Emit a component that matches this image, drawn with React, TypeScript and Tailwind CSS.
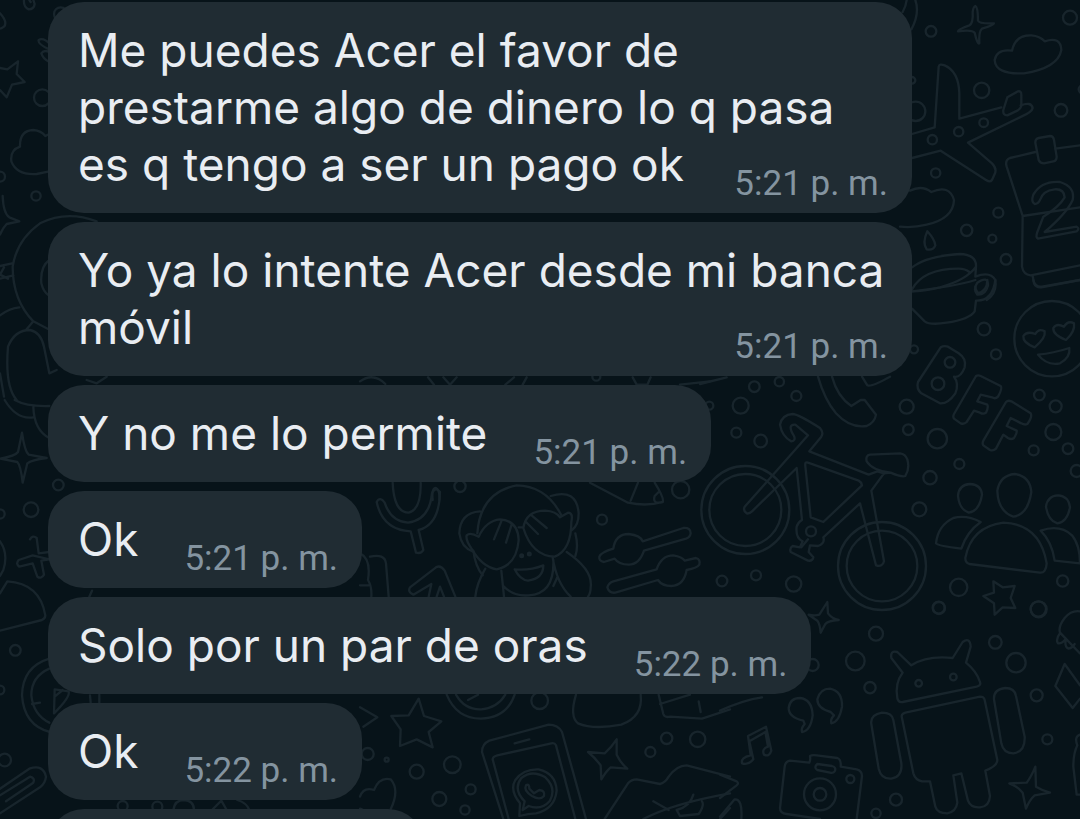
type Message = { id: number; text: string; time: string };

const messages: Message[] = [
  { id: 1, text: "Me puedes Acer el favor de prestarme algo de dinero lo q pasa es q tengo a ser un pago ok", time: "5:21 p. m." },
  { id: 2, text: "Yo ya lo intente Acer desde mi banca móvil", time: "5:21 p. m." },
  { id: 3, text: "Y no me lo permite", time: "5:21 p. m." },
  { id: 4, text: "Ok", time: "5:21 p. m." },
  { id: 5, text: "Solo por un par de oras", time: "5:22 p. m." },
  { id: 6, text: "Ok", time: "5:22 p. m." },
];

type Tile = { x: number; y: number; paths: string[]; dots: [number, number, number][] };

// Each tile is drawn at three units to the pixel, from its own origin.
const tiles: Tile[] = [
  {
    // plane, clouds, calendar, cup
    x: 900,
    y: 0,
    dots: [
      [93, 94, 16], [510, 53, 21], [245, 271, 23], [483, 331, 19], [251, 368, 13], [176, 395, 14],
      [97, 419, 14], [107, 519, 14], [295, 638, 15], [200, 691, 17], [277, 716, 12], [318, 778, 16],
      [47, 334, 29], [36, 241, 10], [548, 268, 12],
    ],
    paths: [
      "M8 36Q18 18 20 0M34 88Q60 40 46 0",
      "M226 18Q234 22 234 62Q238 72 282 70Q282 76 246 86Q236 94 238 130Q232 134 224 98Q216 88 174 94Q174 88 208 76Q220 70 218 36Q220 20 226 18Z",
      "M336 152Q346 104 394 106Q420 108 434 124Q482 108 484 150Q474 204 372 220Q286 224 284 180Q290 146 336 152Z",
      "M36 402L104 382L116 200Q118 190 134 196Q176 214 178 280V356L304 322M362 316Q394 304 398 324Q396 336 364 350L204 428L276 490Q292 506 284 522L276 540Q270 548 258 540L122 452L36 474",
      "M322 292L354 274Q364 272 364 284V318Q362 326 352 332L322 346Q308 346 310 330Z",
      "M30 572Q66 554 94 576Q148 552 162 600Q160 656 80 674Q40 684 0 680",
      "M82 694Q104 718 106 736Q100 752 80 748Q66 728 82 694Z",
      "M36 802Q80 768 180 762Q230 764 228 800Q200 840 120 862Q70 874 36 874M36 868Q70 806 176 806Q196 806 208 816M228 800L226 830Q270 812 286 840Q292 880 260 900M232 848Q264 826 264 856Q256 886 232 884Q218 870 232 848Z",
      "M406 456L330 474Q314 480 320 500L368 648L366 800Q370 824 392 826L540 796M466 446L540 436M368 648L540 622M398 828L402 850Q408 864 424 862L540 840",
      "M416 414L450 408Q460 408 462 420L470 470Q470 482 460 484L432 490Q420 490 416 480L406 428Q406 416 416 414Z",
      "M404 612Q392 606 400 584Q424 542 480 546Q526 560 518 600Q500 640 434 696L530 680Q540 686 530 694L414 716Q406 712 412 696L430 650Q478 620 494 592Q492 566 464 568Q428 572 420 600Q414 612 404 612Z",
    ],
  },
  {
    // bicycle, phone, letters, faces, group
    x: 700,
    y: 280,
    dots: [
      [852, 147, 19], [888, 223, 15], [642, 208, 12], [163, 320, 16], [238, 305, 14], [289, 348, 15],
      [122, 377, 24], [28, 377, 12], [109, 458, 15], [182, 483, 19], [620, 380, 21], [625, 449, 16],
      [712, 476, 29], [778, 552, 15], [690, 593, 20], [658, 688, 21], [1018, 345, 16], [1067, 379, 18],
      [1060, 456, 24], [1104, 506, 16], [1001, 511, 15], [1130, 573, 18], [750, 247, 16], [714, 311, 19],
      [66, 903, 16], [168, 886, 15], [281, 912, 23], [776, 922, 26], [1088, 903, 17], [717, 984, 18],
      [1016, 988, 24], [333, 754, 15], [1056, 176, 113],
      [136, 690, 132], [136, 690, 108], [546, 858, 132], [546, 858, 106],
    ],
    paths: [
      "M0 312L80 292M354 290Q374 360 408 400Q450 446 500 438Q524 428 528 404L494 360L482 360L454 378Q412 350 396 290M486 290L502 316Q512 322 570 290",
      "M636 34Q760 20 826 0M636 86L674 124Q690 136 740 128Q808 118 824 94L828 62Q878 64 886 0M832 40Q862 34 862 0M826 20Q828 44 846 38M1000 0Q1004 22 1026 20L1140 0",
      "M1004 202Q968 188 970 168Q980 152 1006 162Q1016 144 1034 154Q1038 174 1004 202ZM1098 180Q1058 164 1060 144Q1070 128 1092 140Q1104 120 1122 130Q1126 154 1098 180ZM1014 224Q1060 220 1108 204Q1112 232 1080 250Q1040 258 1014 224Z",
      "M722 202Q732 196 744 200L776 220Q800 236 794 262Q782 294 762 290Q778 310 766 340Q744 372 720 370L664 340Q648 326 654 306Z",
      "M828 288Q834 284 842 288L902 318Q908 324 894 350Q886 358 876 352L842 344L832 364L862 374Q866 382 858 398Q850 404 840 398L822 392L800 426Q792 434 782 430L762 416Q758 410 762 402ZM918 366Q924 360 934 364L992 400Q998 410 982 432Q974 436 964 430L932 414L920 438L950 452Q952 458 942 474Q934 480 924 474L910 464L888 506Q880 514 870 510L850 496Q846 490 850 482Z",
      "M140 700Q128 692 134 680L324 466L286 434Q260 432 282 468Q288 482 274 484Q246 470 240 434Q246 404 278 402Q294 402 360 444Q372 458 364 470L328 514L506 584L532 574L552 580L514 632L552 844Q548 862 528 856L480 670L370 772Q376 790 354 798L330 796L326 816L340 832Q338 844 324 842L272 816Q268 804 278 798L300 802L308 784Q286 774 290 740Q294 726 306 720L290 564L156 694Q148 702 140 700Z",
      "M324 548Q314 544 316 558L332 712L370 726L486 616Q484 606 476 602ZM304 802L324 778M552 580L572 578Q604 592 616 588Q630 566 622 538Q616 522 600 520L510 524Q496 526 500 544Q518 572 572 578",
      "M810 612Q844 614 846 644Q838 694 806 698Q778 688 774 648Q776 614 810 612ZM944 582Q990 588 994 636Q984 704 940 710Q894 694 892 632Q900 586 944 582ZM1074 646Q1106 648 1110 682Q1102 726 1072 730Q1044 722 1038 680Q1042 648 1074 646Z",
      "M842 726Q800 704 760 714Q714 736 708 790Q712 798 784 806Q800 756 842 726ZM796 834Q814 740 910 728Q1020 732 1040 850Q1038 880 1020 878L808 852Q796 848 796 834ZM1022 752Q1080 732 1116 766Q1140 796 1140 850L1064 842Q1056 786 1022 752Z",
      "M850 948L882 938L880 904L908 922L944 918L932 954L946 984L908 982L884 1004L882 970Z",
    ],
  },
  {
    // fork, hidden face, spanners
    x: 360,
    y: 480,
    dots: [[300, 19, 17], [726, 119, 15], [962, 29, 26], [485, 227, 4], [508, 222, 4]],
    paths: [
      "M98 8Q102 98 146 98Q184 88 182 8M50 66Q60 48 74 68Q92 124 144 128Q208 120 216 40Q226 18 240 36Q238 134 176 150L190 210Q184 222 168 218L152 154Q68 150 50 66Z",
      "M352 160Q360 38 470 16Q560 18 604 106M360 94Q300 98 298 160Q304 202 338 214M572 48Q650 24 656 100Q656 136 636 150M340 212Q346 260 368 286M646 160Q656 200 646 228",
      "M336 208Q316 180 320 166Q330 156 356 170Q378 122 420 118Q474 122 476 180Q470 256 410 268Q366 260 336 208ZM490 144Q498 92 556 92Q588 94 600 112L624 98Q640 98 634 126Q634 210 584 230Q516 228 490 144ZM476 142L490 142M402 178L424 124M438 188L456 130M512 104L560 144M498 126L534 162",
      "M464 268Q510 272 550 256Q550 296 504 302Q480 300 464 268ZM424 272L432 350M578 232Q590 310 632 350M376 266Q350 310 346 350M620 216Q700 270 692 322Q692 340 684 350M430 318Q460 350 506 346Q584 342 580 240M580 318L592 292",
      "M718 230Q724 216 760 206Q766 162 806 162Q842 166 848 184L970 144Q992 142 992 160Q990 172 978 176L852 212Q838 254 806 254Q776 254 764 236L732 246Q716 244 718 230ZM742 322Q746 308 760 304L890 268Q904 226 940 226Q966 230 974 242L1008 234Q1022 238 1018 254Q1012 264 980 270Q972 316 934 318Q906 318 894 300L766 338Q746 340 742 322Z",
      "M690 8L804 68Q860 80 908 66Q914 56 884 8M812 62L834 8M908 66Q876 74 884 48L896 36M0 220Q34 236 24 300Q36 320 34 350M30 230Q74 220 78 250L86 350M0 316L26 316M286 350L254 272Q242 254 228 262L150 322Q142 336 160 344L214 312L206 350M230 350L240 320L252 350",
    ],
  },
  {
    // stars, heart, handset, open book
    x: 360,
    y: 600,
    dots: [
      [539, 302, 25], [23, 462, 18], [80, 479, 6], [170, 515, 21], [277, 494, 25], [238, 597, 21],
      [332, 568, 15], [315, 630, 14], [920, 415, 17], [1013, 418, 23], [871, 456, 15],
    ],
    paths: [
      "M260 284Q290 356 362 356Q440 354 464 284M288 284Q314 330 364 328Q412 324 436 284M324 300L354 284",
      "M176 296L192 348L244 364L206 396L218 442L170 418L120 438L122 388L94 348L146 346ZM0 322L52 352L10 380",
      "M648 284Q628 350 654 370Q700 390 784 374Q850 350 842 284M896 284L910 342Q914 354 930 350L1026 356L1110 328M900 312L990 284M1016 304L1022 336",
      "M430 657L366 456Q366 432 388 422L566 374Q594 374 606 396L678 657M446 657L398 478Q398 470 412 466L574 430Q584 428 588 436L646 657M464 430L508 418",
      "M478 648L480 610Q448 570 466 540Q490 506 536 508Q588 520 590 572Q584 628 528 640Q506 640 478 648ZM488 630L494 604Q458 568 484 534Q516 508 556 532Q590 564 570 602Q544 632 506 618Z",
      "M498 556Q490 572 516 588Q540 602 552 588Q556 572 538 570L522 580L508 566Q508 550 498 556Z",
      "M770 418L770 464Q784 492 802 506L752 502Q738 514 724 538L722 496Q704 472 684 456L734 460Q754 442 770 418Z",
      "M0 590Q10 560 42 570Q58 530 92 538Q120 570 92 628M0 626Q8 628 20 640",
      "M734 657L804 550Q814 538 830 538L900 552Q916 548 926 530Q950 496 980 496L1110 530M850 657Q940 610 1110 580M880 604L926 630M1000 584Q990 620 950 630L960 648L1016 642Q1034 616 1026 604M1080 657L1110 624",
    ],
  },
  {
    // robot, camera, notes, quotes
    x: 720,
    y: 600,
    dots: [
      [656, 23, 18], [955, 27, 23], [468, 101, 21], [826, 127, 19], [406, 183, 28], [888, 188, 29],
      [278, 195, 18], [450, 263, 17], [950, 286, 18], [982, 418, 15], [528, 599, 18], [468, 640, 14],
      [596, 250, 10], [700, 231, 10], [391, 537, 12], [300, 583, 48], [300, 583, 19],
    ],
    paths: [
      "M322 6L324 40Q336 56 356 60Q324 62 316 72L302 98Q300 72 292 62L266 44Q286 48 298 44ZM0 332Q70 300 126 292",
      "M548 306Q534 308 532 294Q524 250 548 218L514 174Q510 150 532 156L574 196Q620 166 698 174L728 126Q750 110 752 140L738 188Q770 214 780 246Q784 256 770 260Z",
      "M546 354Q542 342 556 338L780 290Q792 290 794 300L832 480Q832 498 796 512L810 588Q808 620 780 622Q752 624 744 602L724 520L700 526L712 608Q708 636 682 640Q652 640 646 620L630 544L606 544Q586 540 580 520Z",
      "M454 372Q450 344 486 338Q516 338 520 360L544 490Q548 530 514 536Q484 538 476 506ZM822 298Q820 268 856 264Q884 264 888 288L914 410Q916 456 880 460Q850 460 844 430Z",
      "M250 362Q206 352 206 324Q210 294 240 294Q276 298 278 346Q272 392 246 396Q242 386 254 372ZM332 336Q292 326 292 298Q300 266 330 266Q368 274 366 320Q358 366 334 370Q330 358 342 346Z",
      "M84 408L138 380L154 452Q148 472 132 464Q124 446 144 440L136 396L88 424L100 478Q86 496 66 490Q62 472 92 466Z",
      "M210 482L268 488Q272 480 270 468Q276 464 290 466L352 474Q364 478 362 500L410 508Q426 512 426 528L410 657M210 482Q196 484 194 500L180 624Q180 640 200 642L300 657M292 492L336 498Q350 502 344 514Q340 520 330 518L292 510Q280 502 292 492Z",
      "M946 500L948 560Q968 572 990 578L944 586Q928 600 918 626L908 578Q894 560 868 550L920 548Q934 530 946 500Z",
      "M1080 34Q1054 30 1034 54Q1014 80 1020 98L1080 160M1020 100Q1006 118 1014 130Q1026 132 1038 116Q1032 140 1046 146Q1058 144 1064 132M1080 256L1034 192L1006 258L1058 324L1080 296M1080 404Q1062 410 1072 436Q1060 460 1060 500L1070 584H1080M0 524L50 544Q58 550 50 556L0 594M0 650L44 598Q68 596 64 657",
    ],
  },
  {
    // star, cloud and bear by the left edge
    x: 0,
    y: 0,
    dots: [[127, 293, 25], [108, 588, 14], [0, 530, 15], [182, 42, 20]],
    paths: [
      "M0 40Q24 66 12 80Q4 86 0 86M72 0Q70 20 86 28Q102 28 104 12L100 0M88 0L92 6",
      "M0 204L22 208L54 184L50 222L74 246L36 254L20 292L0 270M148 130Q130 112 116 120Q112 132 148 148M148 156Q132 148 124 160Q128 176 148 186",
      "M60 440Q58 392 100 390Q124 392 136 408L148 402M60 440Q30 450 34 484Q50 526 110 522L148 514M8 588Q10 640 28 652L58 664L20 672Q8 684 0 704",
      "M290 664Q200 630 120 670Q50 720 38 800Q38 900 100 964L150 990M148 780Q120 800 124 850Q130 876 146 886M0 798L36 790M0 836L40 826M12 802L0 824L24 836M0 946Q30 924 58 922M100 964L78 990M50 1200Q14 1160 24 1040Q44 990 90 990Q122 996 132 1040L148 1120L170 1110M0 1120L12 1190M260 1140L290 1150L320 1130",
    ],
  },
  {
    // sparkle, plus, compass, clip
    x: 0,
    y: 400,
    dots: [[175, 255, 16], [93, 329, 22], [0, 342, 14], [46, 751, 16], [0, 870, 13], [14, 1080, 19]],
    paths: [
      "M14 0Q50 60 100 52M44 0Q80 20 148 18M100 20Q102 90 148 114M66 98Q74 154 86 164L140 174Q94 180 82 190L68 248Q62 196 52 186L0 176Q46 168 54 156Z",
      "M90 418Q98 404 110 414L116 460L148 456M148 478L124 482L132 524Q124 538 112 530L98 490L58 500Q46 492 56 480L98 466ZM0 424Q26 460 10 510L0 528M0 580L22 544Q120 550 136 646Q136 656 126 660L0 692M268 590L276 572",
      "M148 776Q68 800 66 886Q72 976 150 996M148 806Q94 830 94 886Q100 944 148 968M96 912L120 908M162 940L164 868L206 874Q212 890 162 940ZM164 890L188 870M272 908L270 886M298 908V884",
      "M0 1166L88 1106Q130 1092 138 1130Q136 1150 120 1162L0 1240M0 1186L90 1130Q106 1134 100 1148L18 1204",
    ],
  },
  {
    // pieces seen between the bubbles
    x: 360,
    y: 370,
    dots: [[709, 20, 12]],
    paths: [
      "M0 34Q40 6 76 42M204 22L222 44M250 22L270 44L290 22M436 44L462 22M488 44L500 22M818 22L830 44L862 44L872 22M960 44L1050 34M218 390Q214 354 228 354Q240 360 238 390",
    ],
  },
  {
    x: 100,
    y: 796,
    dots: [[68, 30, 15], [172, 32, 15]],
    paths: ["M220 42Q224 12 252 12Q282 14 282 42M336 42L364 14L380 42M412 12Q440 20 448 42"],
  },
];

function Wallpaper() {
  return (
    <svg
      aria-hidden="true"
      className="absolute top-0 left-0 h-full w-full"
      viewBox="0 0 1080 819"
      preserveAspectRatio="xMidYMin slice"
      fill="none"
      stroke="#18252c"
      strokeWidth="7"
      strokeLinecap="round"
      strokeLinejoin="round"
    >
      {tiles.map((t) => (
        <g key={`${t.x}-${t.y}`} transform={`translate(${t.x} ${t.y}) scale(0.33333)`}>
          {t.paths.map((d) => (
            <path key={d} d={d} />
          ))}
          {t.dots.map(([cx, cy, r]) => (
            <circle key={`${cx}-${cy}-${r}`} cx={cx} cy={cy} r={r} />
          ))}
        </g>
      ))}
    </svg>
  );
}

function Bubble({ text, time }: Message) {
  return (
    <li className="w-fit max-w-full rounded-[36px] bg-[#202c33] py-5 pr-6 pl-[30px]">
      <p className="text-[46px] leading-[57px] text-[#e9edf2]">
        {text}
        <time className="float-right mt-[30px] -mb-2.5 ml-[46px] font-['Roboto',sans-serif] text-[35px] leading-9 whitespace-nowrap text-[#8494a0]">
          {time}
        </time>
      </p>
    </li>
  );
}

export default function App() {
  return (
    <main className="relative h-screen overflow-hidden bg-[#071319] font-['Inter','Liberation_Sans',sans-serif]">
      <Wallpaper />
      <ul className="relative ml-12 flex w-4/5 flex-col gap-[9px] pt-0.5">
        {messages.map((m) => (
          <Bubble key={m.id} {...m} />
        ))}
        <li className="h-24 w-[376px] max-w-full rounded-[36px] bg-[#202c33]" />
      </ul>
    </main>
  );
}
